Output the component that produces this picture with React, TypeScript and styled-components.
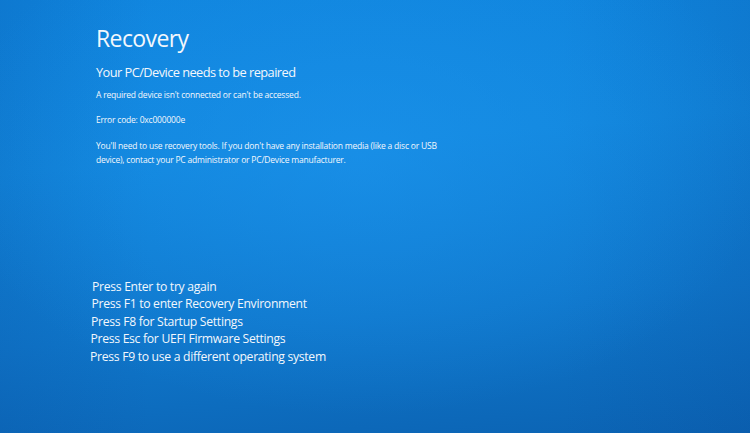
import React from "react";
import styled, { createGlobalStyle } from "styled-components";

const Global = createGlobalStyle`
  html, body { margin: 0; padding: 0; height: 100%; }
  body { background: #0d6fc4; }
  #root { height: 100%; }
`;

const Screen = styled.div`
  width: 750px;
  height: 433px;
  box-sizing: border-box;
  overflow: hidden;
  display: flex;
  flex-direction: column;
  justify-content: space-between;
  padding: 22px 0 68px 96px;
  font-family: "Open Sans", "Noto Sans", sans-serif;
  color: #f3f7fc;
  background:
    radial-gradient(ellipse 55% 60% at 48% 36%, rgba(30, 150, 240, 0.55) 0%, rgba(30, 150, 240, 0) 100%),
    linear-gradient(to right, rgba(8, 70, 150, 0.18) 0%, rgba(8, 70, 150, 0) 20%, rgba(8, 70, 150, 0) 75%, rgba(8, 70, 150, 0.18) 100%),
    linear-gradient(175deg, #0f84dd 0%, #1186dc 35%, #0f76ca 70%, #0b63b3 100%);
`;

const Top = styled.section`
  display: flex;
  flex-direction: column;
`;

const Title = styled.h1`
  margin: 0;
  font-size: 23px;
  font-weight: 400;
  line-height: 32px;
  letter-spacing: -0.6px;
`;

const Subtitle = styled.h2`
  margin: 9px 0 0;
  font-size: 12.8px;
  font-weight: 400;
  line-height: 18px;
  letter-spacing: -0.55px;
`;

const Small = styled.p<{ $gap: number }>`
  margin: ${(p) => p.$gap}px 0 0;
  font-size: 8.5px;
  line-height: 14px;
  max-width: 360px;
  letter-spacing: -0.2px;
`;

const Options = styled.ul`
  list-style: none;
  margin: 0;
  padding: 0;
  display: flex;
  flex-direction: column;
`;

const Option = styled.li<{ $shift: number }>`
  font-size: 12.2px;
  line-height: 17.5px;
  margin-left: ${(p) => p.$shift}px;
  letter-spacing: -0.3px;
`;

const options = [
  "Press Enter to try again",
  "Press F1 to enter Recovery Environment",
  "Press F8 for Startup Settings",
  "Press Esc for UEFI Firmware Settings",
  "Press F9 to use a different operating system",
];

export default function App() {
  return (
    <>
      <Global />
      <Screen>
        <Top>
          <Title>Recovery</Title>
          <Subtitle>Your PC/Device needs to be repaired</Subtitle>
          <Small $gap={7}>A required device isn't connected or can't be accessed.</Small>
          <Small $gap={11}>Error code: 0xc000000e</Small>
          <Small $gap={12}>
            You'll need to use recovery tools. If you don't have any installation media (like a disc or USB
            device), contact your PC administrator or PC/Device manufacturer.
          </Small>
        </Top>
        <Options>
          {options.map((o, i) => (
            <Option key={o} $shift={-4 - i * 0.5}>
              {o}
            </Option>
          ))}
        </Options>
      </Screen>
    </>
  );
}
